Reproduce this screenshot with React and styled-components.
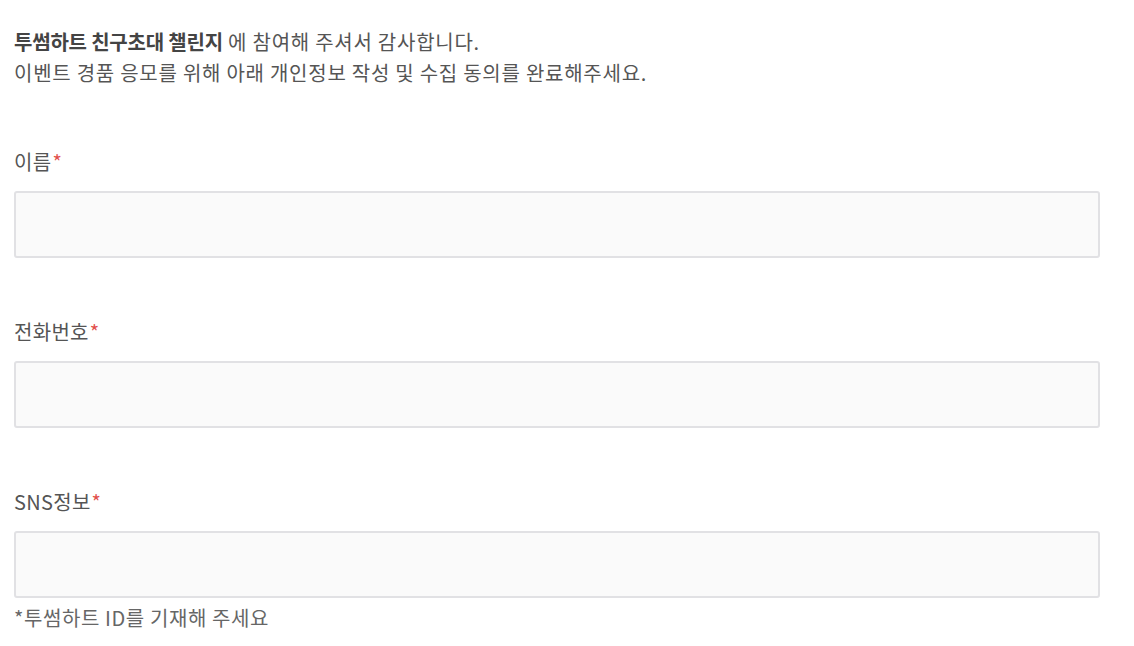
import React from 'react';
import styled, { createGlobalStyle } from 'styled-components';

const GlobalStyle = createGlobalStyle`
  html, body {
    margin: 0;
    padding: 0;
    background: #ffffff;
  }
  body {
    font-family: "Noto Sans CJK KR", "Noto Sans", sans-serif;
    color: #555555;
  }
`;

const Page = styled.main`
  width: 1086px;
  padding: 26px 0 30px 14px;
`;

const Intro = styled.div`
  font-size: 20px;
  line-height: 31px;
  letter-spacing: 0.75px;
  color: #555555;

  strong {
    font-weight: 700;
    color: #444444;
    letter-spacing: -0.2px;
  }
`;

const Form = styled.form`
  display: flex;
  flex-direction: column;
  gap: 61px;
  margin-top: 61px;
`;

const Field = styled.div`
  display: flex;
  flex-direction: column;
`;

const Label = styled.label`
  font-size: 20px;
  line-height: 26px;
  letter-spacing: 0.3px;
  color: #555555;
  margin-bottom: 16px;
`;

const Required = styled.span`
  color: #e2504c;
  margin-left: 1px;
`;

const Input = styled.input`
  box-sizing: border-box;
  width: 100%;
  height: 67px;
  margin: 0;
  padding: 0 16px;
  border: 2px solid #e1e1e4;
  border-radius: 3px;
  background: #fafafa;
  font-family: inherit;
  font-size: 18px;
  color: #333333;
  outline: none;
`;

const Hint = styled.p`
  margin: 7px 0 0;
  font-size: 20px;
  line-height: 26px;
  letter-spacing: 0.6px;
  color: #666666;
`;

const fields = [
  { id: 'name', label: '이름' },
  { id: 'phone', label: '전화번호' },
  { id: 'sns', label: 'SNS정보', hint: '*투썸하트 ID를 기재해 주세요' },
];

const App = () => (
  <>
    <GlobalStyle />
    <Page>
      <Intro>
        <strong>투썸하트 친구초대 챌린지</strong> 에 참여해 주셔서 감사합니다.
        <br />
        이벤트 경품 응모를 위해 아래 개인정보 작성 및 수집 동의를 완료해주세요.
      </Intro>
      <Form onSubmit={(e) => e.preventDefault()}>
        {fields.map((f) => (
          <Field key={f.id}>
            <Label htmlFor={f.id}>
              {f.label}
              <Required>*</Required>
            </Label>
            <Input id={f.id} type="text" />
            {f.hint && <Hint>{f.hint}</Hint>}
          </Field>
        ))}
      </Form>
    </Page>
  </>
);

export default App;
